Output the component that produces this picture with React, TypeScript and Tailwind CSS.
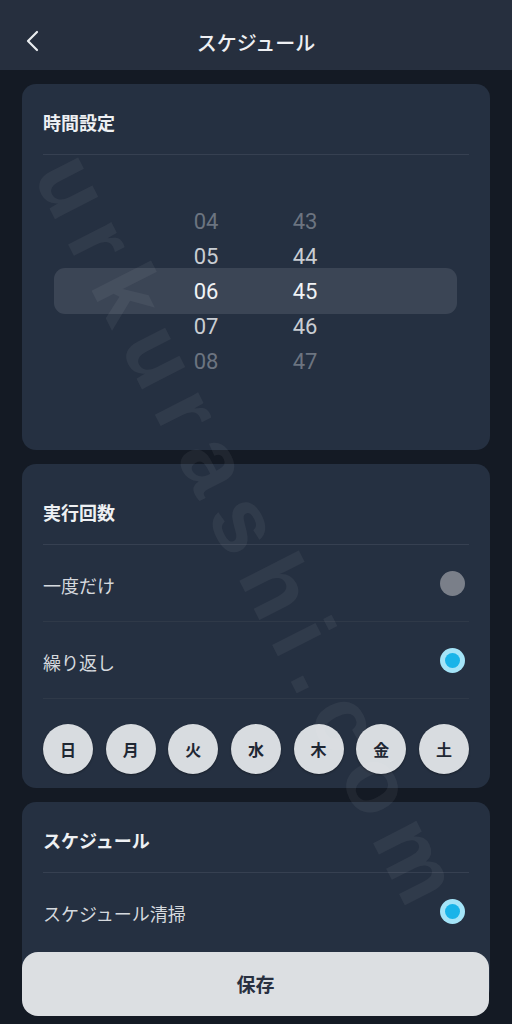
import React from 'react';

const hours = [
  { v: '04', tone: 'text-[#6c7480]' },
  { v: '05', tone: 'text-[#c9cdd3]' },
  { v: '06', tone: 'text-[#f1f3f5]' },
  { v: '07', tone: 'text-[#c9cdd3]' },
  { v: '08', tone: 'text-[#6c7480]' },
];

const minutes = [
  { v: '43', tone: 'text-[#6c7480]' },
  { v: '44', tone: 'text-[#c9cdd3]' },
  { v: '45', tone: 'text-[#f1f3f5]' },
  { v: '46', tone: 'text-[#c9cdd3]' },
  { v: '47', tone: 'text-[#6c7480]' },
];

const days = ['日', '月', '火', '水', '木', '金', '土'];

const Radio: React.FC<{ checked?: boolean }> = ({ checked }) =>
  checked ? (
    <div className="flex h-[25px] w-[25px] items-center justify-center rounded-full bg-[#a4e4f8]">
      <div className="h-[15px] w-[15px] rounded-full bg-[#19b4e9]" />
    </div>
  ) : (
    <div className="h-[25px] w-[25px] rounded-full bg-[#7a7f89]" />
  );

const CardTitle: React.FC<{ title: string; extraTop?: boolean }> = ({ title, extraTop }) => (
  <div className={`${extraTop ? 'pt-[35px]' : 'pt-[25px]'} pb-[19px] border-b border-[#364051]`}>
    <h2 className="h-[26px] text-[18px] leading-[26px] font-bold text-[#eef0f3]">{title}</h2>
  </div>
);

const OptionRow: React.FC<{ label: string; checked?: boolean; last?: boolean }> = ({ label, checked, last }) => (
  <div className={`flex h-[77px] items-center justify-between pr-[4px] ${last ? '' : 'border-b border-[#2f3948]'}`}>
    <span className="pt-[4px] text-[18px] text-[#d5d9de]">{label}</span>
    <Radio checked={checked} />
  </div>
);

export default function App() {
  return (
    <div className="relative h-[1024px] w-[512px] overflow-hidden bg-[#141a24] font-['Noto_Sans_CJK_JP','Noto_Sans',sans-serif]">
      {/* Header */}
      <header className="relative flex h-[70px] justify-center bg-[#262f3e] pt-[28px]">
        <button className="absolute left-[22px] top-[27px] p-[2px]">
          <svg width="16" height="24" viewBox="0 0 16 24" fill="none">
            <polyline points="13,3 4,12 13,21" stroke="#e9ecef" strokeWidth="2.2" strokeLinecap="round" strokeLinejoin="round" />
          </svg>
        </button>
        <h1 className="h-[30px] text-[20px] leading-[30px] font-medium text-[#eef0f3]">スケジュール</h1>
      </header>

      <main className="flex flex-col gap-[14px] px-[22px] pt-[14px]">
        {/* 時間設定 */}
        <section className="h-[366px] rounded-[14px] bg-[#253041] px-[21px]">
          <CardTitle title="時間設定" />
          <div className="relative mt-[49px] font-['Roboto',sans-serif] text-[22px]">
            <div className="absolute left-[11px] right-[12px] top-[64px] h-[46px] rounded-[11px] bg-[#3b4555]" />
            <div className="relative ml-[133px] flex gap-[39px]">
              <div className="flex w-[60px] flex-col">
                {hours.map((h) => (
                  <div key={h.v} className={`flex h-[35px] items-center justify-center ${h.tone}`}>{h.v}</div>
                ))}
              </div>
              <div className="flex w-[60px] flex-col">
                {minutes.map((m) => (
                  <div key={m.v} className={`flex h-[35px] items-center justify-center ${m.tone}`}>{m.v}</div>
                ))}
              </div>
            </div>
          </div>
        </section>

        {/* 実行回数 */}
        <section className="h-[324px] rounded-[14px] bg-[#253041] px-[21px]">
          <CardTitle title="実行回数" extraTop />
          <OptionRow label="一度だけ" />
          <OptionRow label="繰り返し" checked />
          <div className="flex justify-between pt-[25px]">
            {days.map((d) => (
              <div
                key={d}
                className="flex h-[50px] w-[50px] items-center justify-center rounded-full bg-[#d8dce0] text-[16px] font-bold text-[#1f2733] shadow-[0_1px_2px_rgba(0,0,0,0.35)]"
              >
                {d}
              </div>
            ))}
          </div>
        </section>

        {/* スケジュール */}
        <section className="h-[200px] rounded-[14px] bg-[#253041] px-[21px]">
          <CardTitle title="スケジュール" />
          <OptionRow label="スケジュール清掃" checked last />
        </section>
      </main>

      {/* 保存 */}
      <div className="absolute bottom-[8px] left-[22px] right-[23px]">
        <button className="flex h-[64px] w-full items-center justify-center rounded-[16px] bg-[#dcdfe2] text-[19px] font-bold text-[#283040]">
          保存
        </button>
      </div>

      {/* watermark */}
      <div className="pointer-events-none absolute left-[252px] top-[535px] -translate-x-1/2 -translate-y-1/2 rotate-[63deg] whitespace-nowrap font-['Liberation_Sans',sans-serif] text-[92px] font-bold tracking-[16px] text-white/[0.055]">
        urkurashi.com
      </div>
    </div>
  );
}
